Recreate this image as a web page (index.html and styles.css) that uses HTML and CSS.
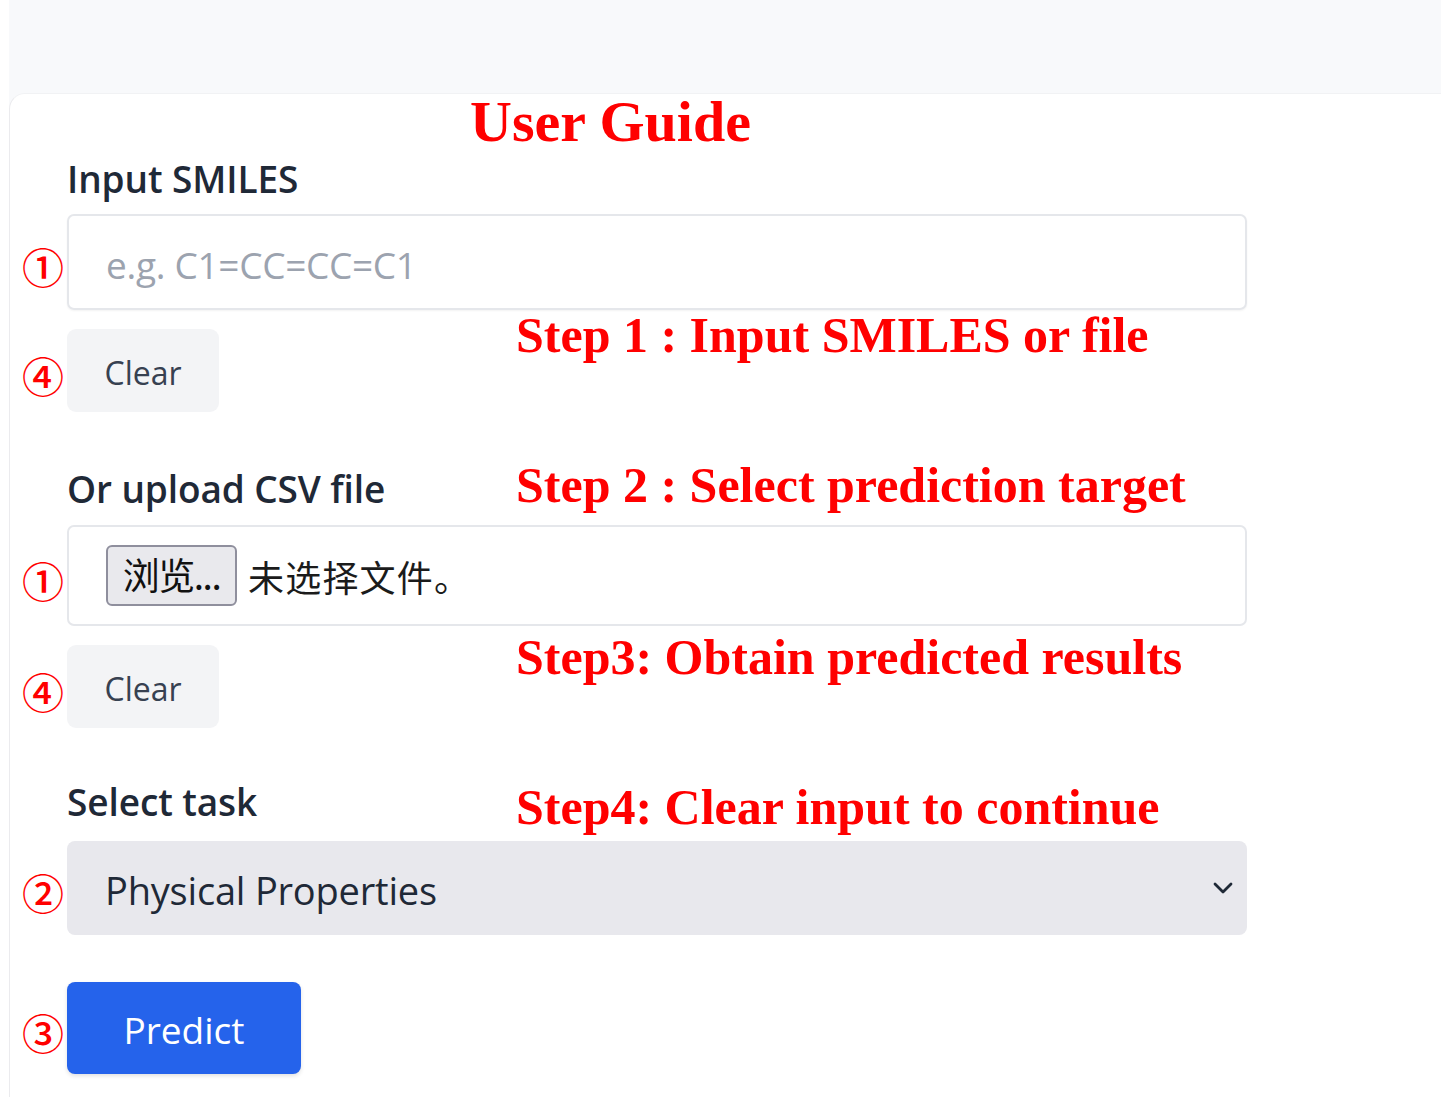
FILE: index.html
```html
<!DOCTYPE html>
<html lang="en">
<head>
<meta charset="utf-8">
<title>User Guide</title>
<link rel="stylesheet" href="styles.css">
</head>
<body>
<div class="page">
  <div class="band">
    <main class="card">
      <section class="section s1">
        <label class="label">Input SMILES</label>
        <div class="field f-input">
          <span class="mark">①</span>
          <div class="text-input"><span class="placeholder">e.g. C1=CC=CC=C1</span></div>
        </div>
        <div class="field f-clear">
          <span class="mark">④</span>
          <button class="btn-clear">Clear</button>
        </div>
      </section>

      <section class="section s2">
        <label class="label">Or upload CSV file</label>
        <div class="field f-file">
          <span class="mark">①</span>
          <div class="file-input">
            <span class="file-btn">浏览...</span>
            <span class="file-name">未选择文件。</span>
          </div>
        </div>
        <div class="field f-clear">
          <span class="mark">④</span>
          <button class="btn-clear">Clear</button>
        </div>
      </section>

      <section class="section s3">
        <label class="label">Select task</label>
        <div class="field f-select">
          <span class="mark">②</span>
          <div class="select">
            <span>Physical Properties</span>
            <svg class="chev" width="22" height="14" viewBox="0 0 22 14"><path d="M3 3 L11 11 L19 3" fill="none" stroke="#1f2937" stroke-width="2.8" stroke-linecap="round" stroke-linejoin="round"/></svg>
          </div>
        </div>
        <div class="field f-predict">
          <span class="mark">③</span>
          <button class="btn-predict">Predict</button>
        </div>
      </section>
    </main>
  </div>

  <div class="note note-title">User Guide</div>
  <div class="note note-1">Step 1 : Input SMILES or file</div>
  <div class="note note-2">Step 2 : Select prediction target</div>
  <div class="note note-3">Step3: Obtain predicted results</div>
  <div class="note note-4">Step4: Clear input to continue</div>
</div>
</body>
</html>
```

FILE: styles.css
```css
* { box-sizing: border-box; }

html, body {
  margin: 0;
  padding: 0;
  background: #ffffff;
}

body {
  font-family: "Open Sans", "Noto Sans", "Noto Sans CJK SC", sans-serif;
  color: #1f2937;
  width: 1441px;
  height: 1097px;
  overflow: hidden;
}

.page {
  position: relative;
  width: 1441px;
  height: 1097px;
}

.band {
  margin-left: 9px;
  background: #f8f9fb;
  padding-top: 93px;
  height: 1097px;
}

.card {
  background: #ffffff;
  border-left: 1px solid #ebebee;
  border-top: 1px solid #f1f2f4;
  border-top-left-radius: 16px;
  height: 1004px;
  padding: 63px 0 0 57px;
}

.section {
  width: 1180px;
  display: flex;
  flex-direction: column;
  align-items: flex-start;
}

.s2 { margin-top: 55px; }
.s3 { margin-top: 52px; }

.label {
  display: block;
  font-size: 37px;
  line-height: 44px;
  font-weight: 600;
  color: #1f2937;
  letter-spacing: -0.1px;
}

.field {
  position: relative;
  width: 100%;
  display: flex;
}

.f-input { margin-top: 13px; }
.f-clear { margin-top: 19px; }
.f-file { margin-top: 14px; }
.f-select { margin-top: 17px; }
.f-predict { margin-top: 47px; }

.mark {
  position: absolute;
  left: -45px;
  top: 50%;
  transform: translateY(-40%);
  font-family: "Noto Sans CJK SC", "DejaVu Sans", sans-serif;
  font-size: 42px;
  font-weight: 500;
  line-height: 1;
  color: #ff0000;
}

.text-input {
  width: 1180px;
  height: 96px;
  border: 2px solid #e5e7eb;
  border-radius: 7px;
  box-shadow: 0 1px 2px rgba(0,0,0,0.05);
  display: flex;
  align-items: center;
  padding-left: 37px;
}

.placeholder {
  font-size: 37px;
  color: #9ca3af;
  letter-spacing: -0.3px;
  padding-top: 4px;
}

.btn-clear {
  width: 152px;
  height: 83px;
  border: none;
  border-radius: 9px;
  background: #f3f4f6;
  color: #374151;
  font-family: "Open Sans", "Noto Sans", sans-serif;
  font-size: 32px;
  padding: 0;
  padding-top: 3px;
}

.file-input {
  width: 1180px;
  height: 101px;
  border: 2px solid #e5e7eb;
  border-radius: 7px;
  display: flex;
  align-items: center;
  padding-left: 37px;
  gap: 11px;
}

.file-btn {
  width: 131px;
  height: 61px;
  background: #e9e9ed;
  border: 2px solid #8f8f9d;
  border-radius: 6px;
  font-family: "Noto Sans CJK SC", sans-serif;
  font-size: 37px;
  line-height: 55px;
  color: #111111;
  text-align: center;
  letter-spacing: -1.5px;
}

.file-name {
  font-family: "Noto Sans CJK SC", sans-serif;
  font-size: 36px;
  color: #1b1b1b;
  letter-spacing: 1.2px;
}

.select {
  width: 1180px;
  height: 94px;
  background: #e8e8ed;
  border-radius: 8px;
  display: flex;
  align-items: center;
  justify-content: space-between;
  padding: 4px 13px 0 38px;
  font-size: 38px;
  color: #1f2937;
  letter-spacing: -0.2px;
}

.chev { margin-top: -4px; }

.btn-predict {
  width: 234px;
  height: 92px;
  border: none;
  border-radius: 8px;
  background: #2563eb;
  color: #ffffff;
  font-family: "Open Sans", "Noto Sans", sans-serif;
  font-size: 37px;
  padding: 0;
  padding-top: 2px;
  box-shadow: 0 2px 4px rgba(0,0,0,0.12);
}

.note {
  position: absolute;
  font-family: "Liberation Serif", "Times New Roman", serif;
  font-weight: 700;
  color: #ff0000;
  line-height: 1;
  white-space: nowrap;
}

.note-title { left: 470px; top: 93px; font-size: 58px; }
.note-1 { left: 516px; top: 310px; font-size: 50px; }
.note-2 { left: 516px; top: 460px; font-size: 50px; }
.note-3 { left: 516px; top: 632px; font-size: 50px; }
.note-4 { left: 516px; top: 782px; font-size: 50px; }
```
